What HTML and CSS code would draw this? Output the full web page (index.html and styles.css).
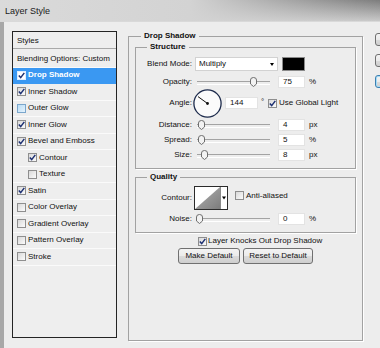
FILE: index.html
```html
<!DOCTYPE html>
<html>
  <head>
    <meta charset="utf-8">
    <link rel="stylesheet" href="styles.css">
  </head>

  <body>
    <div class="window">
      <div class="titlebar">Layer Style</div>

      <div class="dialog">
        <!-- left: list of layer styles -->
        <div class="styles-list">
          <div class="list-head">Styles</div>
          <div class="list-item blending">Blending Options: Custom</div>
          <div class="list-item selected">
            <span class="cb"><svg viewBox="0 0 7 7"><path d="M0.8 3.4 L2.7 5.6 L6.3 0.9" /></svg></span>Drop Shadow
          </div>
          <div class="list-item">
            <span class="cb"><svg viewBox="0 0 7 7"><path d="M0.8 3.4 L2.7 5.6 L6.3 0.9" /></svg></span>Inner Shadow
          </div>
          <div class="list-item"><span class="cb hover"></span>Outer Glow</div>
          <div class="list-item">
            <span class="cb"><svg viewBox="0 0 7 7"><path d="M0.8 3.4 L2.7 5.6 L6.3 0.9" /></svg></span>Inner Glow
          </div>
          <div class="list-item">
            <span class="cb"><svg viewBox="0 0 7 7"><path d="M0.8 3.4 L2.7 5.6 L6.3 0.9" /></svg></span>Bevel and Emboss
          </div>
          <div class="list-item sub">
            <span class="cb"><svg viewBox="0 0 7 7"><path d="M0.8 3.4 L2.7 5.6 L6.3 0.9" /></svg></span>Contour
          </div>
          <div class="list-item sub"><span class="cb"></span>Texture</div>
          <div class="list-item">
            <span class="cb"><svg viewBox="0 0 7 7"><path d="M0.8 3.4 L2.7 5.6 L6.3 0.9" /></svg></span>Satin
          </div>
          <div class="list-item"><span class="cb"></span>Color Overlay</div>
          <div class="list-item"><span class="cb"></span>Gradient Overlay</div>
          <div class="list-item"><span class="cb"></span>Pattern Overlay</div>
          <div class="list-item"><span class="cb"></span>Stroke</div>
        </div>

        <!-- middle: drop shadow settings -->
        <fieldset class="group outer">
          <legend>Drop Shadow</legend>

          <fieldset class="group structure">
            <legend>Structure</legend>

            <div class="row blend">
              <span class="label">Blend Mode:</span>
              <div class="select">Multiply<span class="arrow"></span></div>
              <span class="swatch"></span>
            </div>

            <div class="row opacity">
              <span class="label">Opacity:</span>
              <div class="slider">
                <svg class="thumb" style="left: 55px" viewBox="0 0 7 10"><path d="M0.5 3 Q0.5 0.5 3.5 0.5 Q6.5 0.5 6.5 3 L6.5 7 L3.5 9.5 L0.5 7 Z" /></svg>
              </div>
              <span class="field">75</span>
              <span class="unit">%</span>
            </div>

            <div class="row angle">
              <span class="label">Angle:</span>
              <svg class="dial" viewBox="0 0 29 29">
                <circle cx="14.5" cy="14.5" r="13.6" fill="#fbfbfb" stroke="#1d2b4c" stroke-width="1.3" />
                <line x1="14.5" y1="14.5" x2="5" y2="7.6" stroke="#111" stroke-width="1" />
                <circle cx="14.5" cy="14.5" r="1.4" fill="#111" />
              </svg>
              <span class="field wide">144</span>
              <span class="degree">°</span>
              <span class="cb"><svg viewBox="0 0 7 7"><path d="M0.8 3.4 L2.7 5.6 L6.3 0.9" /></svg></span>
              <span class="cb-text">Use Global Light</span>
            </div>

            <div class="row step">
              <span class="label">Distance:</span>
              <div class="slider">
                <svg class="thumb" style="left: 3px" viewBox="0 0 7 10"><path d="M0.5 3 Q0.5 0.5 3.5 0.5 Q6.5 0.5 6.5 3 L6.5 7 L3.5 9.5 L0.5 7 Z" /></svg>
              </div>
              <span class="field">4</span>
              <span class="unit">px</span>
            </div>

            <div class="row step spaced">
              <span class="label">Spread:</span>
              <div class="slider">
                <svg class="thumb" style="left: 3px" viewBox="0 0 7 10"><path d="M0.5 3 Q0.5 0.5 3.5 0.5 Q6.5 0.5 6.5 3 L6.5 7 L3.5 9.5 L0.5 7 Z" /></svg>
              </div>
              <span class="field">5</span>
              <span class="unit">%</span>
            </div>

            <div class="row step spaced">
              <span class="label">Size:</span>
              <div class="slider">
                <svg class="thumb" style="left: 6px" viewBox="0 0 7 10"><path d="M0.5 3 Q0.5 0.5 3.5 0.5 Q6.5 0.5 6.5 3 L6.5 7 L3.5 9.5 L0.5 7 Z" /></svg>
              </div>
              <span class="field">8</span>
              <span class="unit">px</span>
            </div>
          </fieldset>

          <fieldset class="group quality">
            <legend>Quality</legend>

            <div class="row contour-row">
              <span class="label">Contour:</span>
              <svg class="contour" viewBox="0 0 34 24">
                <defs>
                  <linearGradient id="curve" x1="0" y1="0" x2="1" y2="1">
                    <stop offset="0" stop-color="#b4b4b4" />
                    <stop offset="1" stop-color="#7c7c7c" />
                  </linearGradient>
                </defs>
                <rect x="0.5" y="0.5" width="33" height="23" fill="#fff" stroke="#2b2b2b" />
                <polygon points="1,23 26,1 26,23" fill="url(#curve)" />
                <line x1="26.5" y1="1" x2="26.5" y2="23" stroke="#8a8a8a" />
                <polygon points="28,10.5 32,10.5 30,13.5" fill="#000" />
              </svg>
              <span class="cb"></span>
              <span class="cb-text">Anti-aliased</span>
            </div>

            <div class="row noise">
              <span class="label">Noise:</span>
              <div class="slider">
                <svg class="thumb" style="left: 1px" viewBox="0 0 7 10"><path d="M0.5 3 Q0.5 0.5 3.5 0.5 Q6.5 0.5 6.5 3 L6.5 7 L3.5 9.5 L0.5 7 Z" /></svg>
              </div>
              <span class="field">0</span>
              <span class="unit">%</span>
            </div>
          </fieldset>

          <div class="knockout">
            <span class="cb"><svg viewBox="0 0 7 7"><path d="M0.8 3.4 L2.7 5.6 L6.3 0.9" /></svg></span>
            <span class="cb-text">Layer Knocks Out Drop Shadow</span>
          </div>

          <div class="buttons">
            <button class="btn make">Make Default</button>
            <button class="btn reset">Reset to Default</button>
          </div>
        </fieldset>

        <!-- right: OK / Cancel / New Style buttons, cut off by the window -->
        <div class="side">
          <button class="btn side-btn"></button>
          <button class="btn side-btn"></button>
          <button class="btn side-btn focused"></button>
        </div>
      </div>
    </div>
  </body>
</html>
```

FILE: styles.css
```css
/* general styling */
* {
  box-sizing: border-box;
  margin: 0;
  padding: 0;
}

html,
body {
  height: 348px;
  overflow: hidden;
  width: 380px;
}

body {
  background-color: #ededed;
  color: #111;
  font-family: "Liberation Sans", Arial, sans-serif;
  font-size: 8px;
  line-height: 10px;
}

.window {
  display: flex;
  flex-direction: column;
  height: 348px;
}

.titlebar {
  background: linear-gradient(to right, #dadada 0, #d3d3d3 50%, rgba(211, 211, 211, 0) 100%),
    linear-gradient(#7d7d7d, #c9c9c9);
  border-bottom: 1px solid #d9d9d9;
  color: #1a1a1a;
  font-size: 9px;
  height: 22px;
  padding: 6px 0 0 5px;
}

.dialog {
  background-color: #ededed;
  border-left: 4px solid #a8a8a8;
  display: flex;
  flex: 1;
  padding: 9px 0 7px 8px;
}

/* styles list */
.styles-list {
  background-color: #eeeeee;
  border: 1px solid #242424;
  flex-shrink: 0;
  margin-bottom: 3px;
  width: 105px;
}

.list-head {
  border-bottom: 1px solid #a9a9a9;
  height: 17px;
  padding: 4px 0 0 4px;
}

.list-item {
  align-items: center;
  border-bottom: 1px solid #fafafa;
  display: flex;
  height: 16.5px;
  padding-left: 4px;
  white-space: nowrap;
}

.list-item.blending {
  height: 18.5px;
  padding-top: 2px;
}

.list-item.sub {
  padding-left: 15px;
}

.list-item.selected {
  background-color: #3a98f2;
  border-bottom-color: #3a98f2;
  color: #fff;
  font-weight: bold;
}

/* checkbox */
.cb {
  align-items: center;
  background: linear-gradient(135deg, #d9d9d9, #fbfbfb);
  border: 1px solid #8e8e8e;
  display: inline-flex;
  flex-shrink: 0;
  height: 9px;
  justify-content: center;
  margin-right: 2px;
  width: 9px;
}

.cb svg {
  fill: none;
  height: 7px;
  stroke: #1c2f72;
  stroke-width: 1.5;
  width: 7px;
}

.cb.hover {
  background: linear-gradient(135deg, #b9dcf5, #e6f3fc);
  border-color: #7aa6cc;
}

.selected .cb {
  background: #fff;
  border-color: #dfeeff;
}

/* group boxes */
.group {
  border: 1px solid #a2a2a2;
  box-shadow: 1px 1px 0 #fff;
  min-width: 0;
}

.group legend {
  font-weight: bold;
  line-height: 10px;
  padding: 0 3px;
}

.outer {
  flex-shrink: 0;
  margin-left: 11px;
  padding: 1px 6px 0;
  width: 235px;
}

.outer > legend {
  margin-left: 6px;
}

.structure,
.quality {
  padding: 5px 4px 6px;
}

.structure > legend,
.quality > legend {
  margin-left: 7px;
}

.quality {
  margin-top: 3px;
  padding: 4px 4px 7px;
}

/* rows */
.row {
  align-items: center;
  display: flex;
  white-space: nowrap;
}

.label {
  flex-shrink: 0;
  margin-right: 3px;
  text-align: right;
  width: 52px;
}

.blend {
  height: 14px;
  margin-bottom: 4px;
}

.opacity {
  height: 13px;
}

.angle {
  height: 30px;
}

.step {
  height: 14px;
}

.step.spaced {
  margin-top: 1px;
}

.select {
  align-items: center;
  background-color: #fff;
  border: 1px solid #d2d2d2;
  display: flex;
  height: 14px;
  margin-right: 4px;
  padding: 0 3px;
  width: 83px;
}

.arrow {
  border-left: 2.5px solid transparent;
  border-right: 2.5px solid transparent;
  border-top: 3px solid #000;
  margin-left: auto;
}

.swatch {
  background-color: #000;
  border: 1px solid #8a8a8a;
  height: 14px;
  width: 23px;
}

.slider {
  flex-shrink: 0;
  height: 12px;
  margin-right: 3px;
  position: relative;
  width: 80px;
}

.slider::before {
  border-bottom: 1px solid #fff;
  border-top: 1px solid #a3a3a3;
  content: "";
  height: 2px;
  left: 2px;
  position: absolute;
  right: 5px;
  top: 5px;
}

.thumb {
  height: 10px;
  position: absolute;
  top: 1px;
  width: 7px;
}

.thumb path {
  fill: #f2f2f2;
  stroke: #6e6e6e;
}

.field {
  background-color: #fff;
  border: 1px solid #e3e3e3;
  flex-shrink: 0;
  height: 12px;
  margin-right: 4px;
  padding-left: 4px;
  width: 27px;
}

.field.wide {
  margin-right: 3px;
  width: 33px;
}

.degree {
  align-self: flex-start;
  margin: 9px 3px 0 0;
  width: 4px;
}

.dial {
  flex-shrink: 0;
  height: 29px;
  margin: 0 3px 0 -2px;
  width: 29px;
}

.contour-row {
  height: 24px;
}

.contour {
  flex-shrink: 0;
  height: 24px;
  margin: 0 7px 0 -1px;
  width: 34px;
}

.contour-row .cb {
  align-self: flex-start;
  margin-top: 5px;
}

.contour-row .cb-text {
  align-self: flex-start;
  margin-top: 5px;
}

.noise {
  height: 12px;
  margin-top: 3px;
}

.knockout {
  align-items: center;
  display: flex;
  height: 10px;
  margin-top: 3px;
  padding-left: 63px;
  white-space: nowrap;
}

.knockout .cb {
  margin-right: 1px;
}

/* buttons */
.buttons {
  display: flex;
  gap: 3px;
  justify-content: center;
  margin-top: 2px;
}

.btn {
  background: linear-gradient(#f3f3f3, #ebebeb 50%, #dadada 51%, #cfcfcf);
  border: 1px solid #707070;
  border-radius: 3px;
  color: #111;
  font: inherit;
  height: 16px;
}

.btn.make {
  width: 62px;
}

.btn.reset {
  width: 70px;
}

/* only the left edge of these buttons is inside the window */
.side {
  display: flex;
  flex-direction: column;
  flex-shrink: 0;
  gap: 8px;
  margin-left: 12px;
  overflow: hidden;
  padding-top: 2px;
  width: 5px;
}

.side-btn {
  flex-shrink: 0;
  height: 13px;
  width: 40px;
}

.side-btn.focused {
  border-color: #3c7fb1;
  box-shadow: inset 0 0 0 1px #a6dcf7;
}
```
